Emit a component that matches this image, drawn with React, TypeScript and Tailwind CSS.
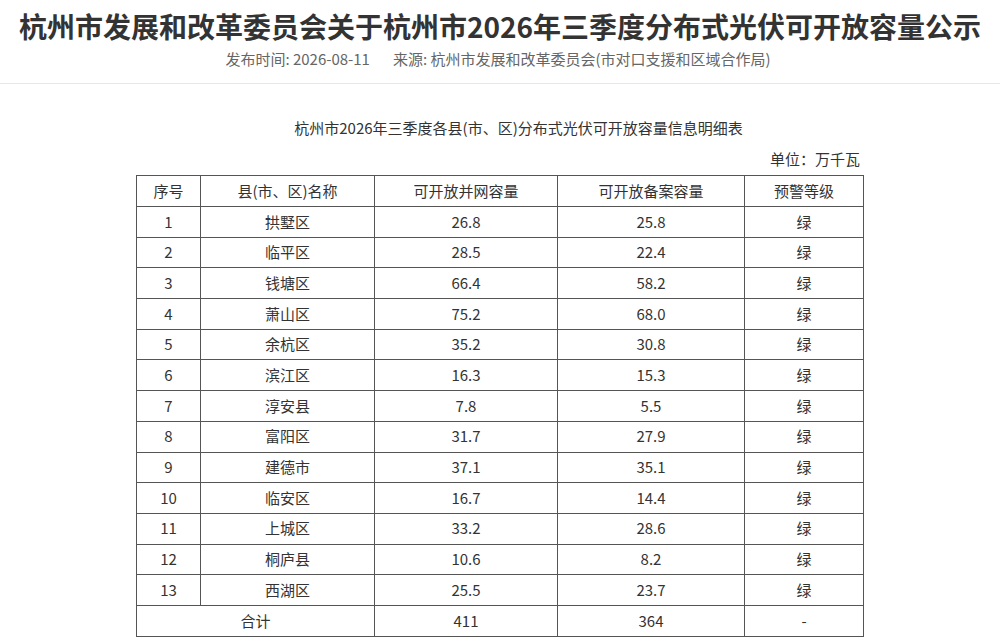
import React from "react";

type Row = { no: number; name: string; grid: string; record: string; level: string };

const ROWS: Row[] = [
  { no: 1, name: "拱墅区", grid: "26.8", record: "25.8", level: "绿" },
  { no: 2, name: "临平区", grid: "28.5", record: "22.4", level: "绿" },
  { no: 3, name: "钱塘区", grid: "66.4", record: "58.2", level: "绿" },
  { no: 4, name: "萧山区", grid: "75.2", record: "68.0", level: "绿" },
  { no: 5, name: "余杭区", grid: "35.2", record: "30.8", level: "绿" },
  { no: 6, name: "滨江区", grid: "16.3", record: "15.3", level: "绿" },
  { no: 7, name: "淳安县", grid: "7.8", record: "5.5", level: "绿" },
  { no: 8, name: "富阳区", grid: "31.7", record: "27.9", level: "绿" },
  { no: 9, name: "建德市", grid: "37.1", record: "35.1", level: "绿" },
  { no: 10, name: "临安区", grid: "16.7", record: "14.4", level: "绿" },
  { no: 11, name: "上城区", grid: "33.2", record: "28.6", level: "绿" },
  { no: 12, name: "桐庐县", grid: "10.6", record: "8.2", level: "绿" },
  { no: 13, name: "西湖区", grid: "25.5", record: "23.7", level: "绿" },
];

const cell = "border border-[#555] text-center align-middle p-0";

export default function App() {
  return (
    <div className="min-h-screen bg-white text-[#333] font-['Noto_Sans_CJK_SC','Noto_Sans',sans-serif]">
      {/* 标题 */}
      <header className="pt-[7px] text-center">
        <h1 className="text-[28px] font-bold leading-[38px] text-[#333]">
          杭州市发展和改革委员会关于杭州市2026年三季度分布式光伏可开放容量公示
        </h1>
        <p className="mt-[2px] text-[15px] leading-[24px] text-[#666] flex justify-center gap-[23px] pr-[4px]">
          <span>发布时间: 2026-08-11</span>
          <span>来源: 杭州市发展和改革委员会(市对口支援和区域合作局)</span>
        </p>
      </header>

      <div className="mt-[12px] border-t border-[#e8e8e8]" />

      {/* 正文 */}
      <main className="w-[727px] ml-[136px]">
        <p className="mt-[32px] pl-[38px] text-center text-[15px] leading-[24px]">
          杭州市2026年三季度各县(市、区)分布式光伏可开放容量信息明细表
        </p>
        <p className="mt-[7px] text-right text-[15px] leading-[24px] pr-[3px]">单位：万千瓦</p>

        <table className="mt-[4px] w-[727px] table-fixed border-collapse text-[15px]">
          <colgroup>
            <col className="w-[64px]" />
            <col className="w-[174px]" />
            <col className="w-[183px]" />
            <col className="w-[187px]" />
            <col className="w-[119px]" />
          </colgroup>
          <thead>
            <tr className="h-[31px]">
              <th className={`${cell} font-normal`}>序号</th>
              <th className={`${cell} font-normal`}>县(市、区)名称</th>
              <th className={`${cell} font-normal`}>可开放并网容量</th>
              <th className={`${cell} font-normal`}>可开放备案容量</th>
              <th className={`${cell} font-normal`}>预警等级</th>
            </tr>
          </thead>
          <tbody>
            {ROWS.map((r) => (
              <tr key={r.no} className="h-[30.7px]">
                <td className={cell}>{r.no}</td>
                <td className={cell}>{r.name}</td>
                <td className={cell}>{r.grid}</td>
                <td className={cell}>{r.record}</td>
                <td className={cell}>{r.level}</td>
              </tr>
            ))}
            <tr className="h-[30.7px]">
              <td className={cell} colSpan={2}>合计</td>
              <td className={cell}>411</td>
              <td className={cell}>364</td>
              <td className={cell}>-</td>
            </tr>
          </tbody>
        </table>
      </main>
    </div>
  );
}
